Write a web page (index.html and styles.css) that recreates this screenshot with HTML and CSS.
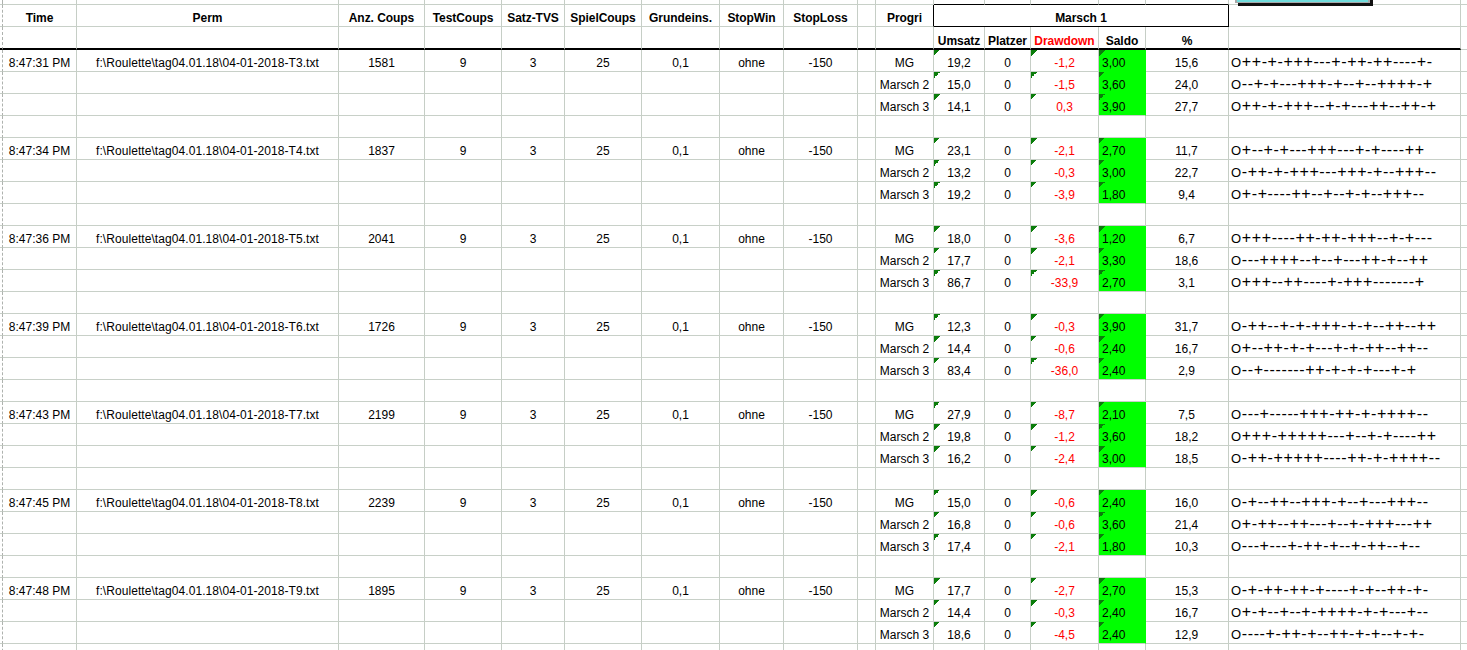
FILE: index.html
```html
<!DOCTYPE html>
<html lang="de">
<head>
<meta charset="utf-8">
<title>Roulette</title>
<link rel="stylesheet" href="styles.css">
</head>
<body>
<div class="sheet">
<div class="button-edge"></div>
<table class="grid">
<colgroup>
<col class="c-edge"><col class="c-time"><col class="c-perm"><col class="c-anz"><col class="c-test"><col class="c-satz"><col class="c-spiel"><col class="c-grund"><col class="c-win"><col class="c-loss"><col class="c-gap"><col class="c-progri"><col class="c-ums"><col class="c-platz"><col class="c-draw"><col class="c-saldo"><col class="c-pct"><col class="c-seq"><col class="c-rest">
</colgroup>
<tbody>
<tr class="r-top"><td class="edge"></td><td></td><td></td><td></td><td></td><td></td><td></td><td></td><td></td><td></td><td></td><td></td><td class="boxtop"></td><td class="boxtop"></td><td class="boxtop"></td><td class="boxtop"></td><td class="boxtop"></td><td></td><td></td></tr>
<tr class="r-head"><td class="edge"></td><th>Time</th><th>Perm</th><th>Anz. Coups</th><th>TestCoups</th><th>Satz-TVS</th><th>SpielCoups</th><th>Grundeins.</th><th>StopWin</th><th>StopLoss</th><th></th><th class="boxleft">Progri</th><th class="box" colspan="5">Marsch 1</th><td></td><td></td></tr>
<tr class="r-sub"><td class="edge"></td><td></td><td></td><td></td><td></td><td></td><td></td><td></td><td></td><td></td><td></td><td></td><th>Umsatz</th><th>Platzer</th><th class="red">Drawdown</th><th>Saldo</th><th>%</th><td></td><td class="open"></td></tr>

<tr><td class="edge"></td><td>8:47:31 PM</td><td class="perm">f:\Roulette\tag04.01.18\04-01-2018-T3.txt</td><td>1581</td><td>9</td><td>3</td><td>25</td><td>0,1</td><td>ohne</td><td>-150</td><td></td><td>MG</td><td class="note">19,2</td><td>0</td><td class="note red">-1,2</td><td class="saldo">3,00</td><td class="pct">15,6</td><td class="seq">O++-+-+++---+-++-++----+-</td><td></td></tr>
<tr><td class="edge"></td><td></td><td></td><td></td><td></td><td></td><td></td><td></td><td></td><td></td><td></td><td>Marsch 2</td><td class="note">15,0</td><td>0</td><td class="note red">-1,5</td><td class="saldo">3,60</td><td class="pct">24,0</td><td class="seq">O--+-+---+++-+--+--++++-+</td><td></td></tr>
<tr><td class="edge"></td><td></td><td></td><td></td><td></td><td></td><td></td><td></td><td></td><td></td><td></td><td>Marsch 3</td><td class="note">14,1</td><td>0</td><td class="note red">0,3</td><td class="saldo end">3,90</td><td class="pct">27,7</td><td class="seq">O++-+-+++--+-+---++--++-+</td><td></td></tr>
<tr><td class="edge"></td><td></td><td></td><td></td><td></td><td></td><td></td><td></td><td></td><td></td><td></td><td></td><td></td><td></td><td></td><td></td><td></td><td></td><td></td></tr>

<tr><td class="edge"></td><td>8:47:34 PM</td><td class="perm">f:\Roulette\tag04.01.18\04-01-2018-T4.txt</td><td>1837</td><td>9</td><td>3</td><td>25</td><td>0,1</td><td>ohne</td><td>-150</td><td></td><td>MG</td><td class="note">23,1</td><td>0</td><td class="note red">-2,1</td><td class="saldo">2,70</td><td class="pct">11,7</td><td class="seq">O+--+-+---+++---+-+----++</td><td></td></tr>
<tr><td class="edge"></td><td></td><td></td><td></td><td></td><td></td><td></td><td></td><td></td><td></td><td></td><td>Marsch 2</td><td class="note">13,2</td><td>0</td><td class="note red">-0,3</td><td class="saldo">3,00</td><td class="pct">22,7</td><td class="seq">O-++-+-+++---+++-+--+++--</td><td></td></tr>
<tr><td class="edge"></td><td></td><td></td><td></td><td></td><td></td><td></td><td></td><td></td><td></td><td></td><td>Marsch 3</td><td class="note">19,2</td><td>0</td><td class="note red">-3,9</td><td class="saldo end">1,80</td><td class="pct">9,4</td><td class="seq">O+-+----++--+--+-+--+++--</td><td></td></tr>
<tr><td class="edge"></td><td></td><td></td><td></td><td></td><td></td><td></td><td></td><td></td><td></td><td></td><td></td><td></td><td></td><td></td><td></td><td></td><td></td><td></td></tr>

<tr><td class="edge"></td><td>8:47:36 PM</td><td class="perm">f:\Roulette\tag04.01.18\04-01-2018-T5.txt</td><td>2041</td><td>9</td><td>3</td><td>25</td><td>0,1</td><td>ohne</td><td>-150</td><td></td><td>MG</td><td class="note">18,0</td><td>0</td><td class="note red">-3,6</td><td class="saldo">1,20</td><td class="pct">6,7</td><td class="seq">O+++----++-++-+++--+-+---</td><td></td></tr>
<tr><td class="edge"></td><td></td><td></td><td></td><td></td><td></td><td></td><td></td><td></td><td></td><td></td><td>Marsch 2</td><td class="note">17,7</td><td>0</td><td class="note red">-2,1</td><td class="saldo">3,30</td><td class="pct">18,6</td><td class="seq">O---++++--+--+---++-+--++</td><td></td></tr>
<tr><td class="edge"></td><td></td><td></td><td></td><td></td><td></td><td></td><td></td><td></td><td></td><td></td><td>Marsch 3</td><td class="note">86,7</td><td>0</td><td class="note red">-33,9</td><td class="saldo end">2,70</td><td class="pct">3,1</td><td class="seq">O+++--++----+-+++-------+</td><td></td></tr>
<tr><td class="edge"></td><td></td><td></td><td></td><td></td><td></td><td></td><td></td><td></td><td></td><td></td><td></td><td></td><td></td><td></td><td></td><td></td><td></td><td></td></tr>

<tr><td class="edge"></td><td>8:47:39 PM</td><td class="perm">f:\Roulette\tag04.01.18\04-01-2018-T6.txt</td><td>1726</td><td>9</td><td>3</td><td>25</td><td>0,1</td><td>ohne</td><td>-150</td><td></td><td>MG</td><td class="note">12,3</td><td>0</td><td class="note red">-0,3</td><td class="saldo">3,90</td><td class="pct">31,7</td><td class="seq">O-++--+-+-+++-+-+--++--++</td><td></td></tr>
<tr><td class="edge"></td><td></td><td></td><td></td><td></td><td></td><td></td><td></td><td></td><td></td><td></td><td>Marsch 2</td><td class="note">14,4</td><td>0</td><td class="note red">-0,6</td><td class="saldo">2,40</td><td class="pct">16,7</td><td class="seq">O+--++-+-+---+-+-++--++--</td><td></td></tr>
<tr><td class="edge"></td><td></td><td></td><td></td><td></td><td></td><td></td><td></td><td></td><td></td><td></td><td>Marsch 3</td><td class="note">83,4</td><td>0</td><td class="note red">-36,0</td><td class="saldo end">2,40</td><td class="pct">2,9</td><td class="seq">O--+-------++-+-+-+---+-+</td><td></td></tr>
<tr><td class="edge"></td><td></td><td></td><td></td><td></td><td></td><td></td><td></td><td></td><td></td><td></td><td></td><td></td><td></td><td></td><td></td><td></td><td></td><td></td></tr>

<tr><td class="edge"></td><td>8:47:43 PM</td><td class="perm">f:\Roulette\tag04.01.18\04-01-2018-T7.txt</td><td>2199</td><td>9</td><td>3</td><td>25</td><td>0,1</td><td>ohne</td><td>-150</td><td></td><td>MG</td><td class="note">27,9</td><td>0</td><td class="note red">-8,7</td><td class="saldo">2,10</td><td class="pct">7,5</td><td class="seq">O---+-----+++-++-+-++++--</td><td></td></tr>
<tr><td class="edge"></td><td></td><td></td><td></td><td></td><td></td><td></td><td></td><td></td><td></td><td></td><td>Marsch 2</td><td class="note">19,8</td><td>0</td><td class="note red">-1,2</td><td class="saldo">3,60</td><td class="pct">18,2</td><td class="seq">O+++-+++++---+--+-+----++</td><td></td></tr>
<tr><td class="edge"></td><td></td><td></td><td></td><td></td><td></td><td></td><td></td><td></td><td></td><td></td><td>Marsch 3</td><td class="note">16,2</td><td>0</td><td class="note red">-2,4</td><td class="saldo end">3,00</td><td class="pct">18,5</td><td class="seq">O-++-+++++----++-+-++++--</td><td></td></tr>
<tr><td class="edge"></td><td></td><td></td><td></td><td></td><td></td><td></td><td></td><td></td><td></td><td></td><td></td><td></td><td></td><td></td><td></td><td></td><td></td><td></td></tr>

<tr><td class="edge"></td><td>8:47:45 PM</td><td class="perm">f:\Roulette\tag04.01.18\04-01-2018-T8.txt</td><td>2239</td><td>9</td><td>3</td><td>25</td><td>0,1</td><td>ohne</td><td>-150</td><td></td><td>MG</td><td class="note">15,0</td><td>0</td><td class="note red">-0,6</td><td class="saldo">2,40</td><td class="pct">16,0</td><td class="seq">O-+--++--+++-+--+---+++--</td><td></td></tr>
<tr><td class="edge"></td><td></td><td></td><td></td><td></td><td></td><td></td><td></td><td></td><td></td><td></td><td>Marsch 2</td><td class="note">16,8</td><td>0</td><td class="note red">-0,6</td><td class="saldo">3,60</td><td class="pct">21,4</td><td class="seq">O+-++--++---+--+-+++---++</td><td></td></tr>
<tr><td class="edge"></td><td></td><td></td><td></td><td></td><td></td><td></td><td></td><td></td><td></td><td></td><td>Marsch 3</td><td class="note">17,4</td><td>0</td><td class="note red">-2,1</td><td class="saldo end">1,80</td><td class="pct">10,3</td><td class="seq">O---+---+-++-+--+-++--+--</td><td></td></tr>
<tr><td class="edge"></td><td></td><td></td><td></td><td></td><td></td><td></td><td></td><td></td><td></td><td></td><td></td><td></td><td></td><td></td><td></td><td></td><td></td><td></td></tr>

<tr><td class="edge"></td><td>8:47:48 PM</td><td class="perm">f:\Roulette\tag04.01.18\04-01-2018-T9.txt</td><td>1895</td><td>9</td><td>3</td><td>25</td><td>0,1</td><td>ohne</td><td>-150</td><td></td><td>MG</td><td class="note">17,7</td><td>0</td><td class="note red">-2,7</td><td class="saldo">2,70</td><td class="pct">15,3</td><td class="seq">O-+-++-++-+----+-+--++-+-</td><td></td></tr>
<tr><td class="edge"></td><td></td><td></td><td></td><td></td><td></td><td></td><td></td><td></td><td></td><td></td><td>Marsch 2</td><td class="note">14,4</td><td>0</td><td class="note red">-0,3</td><td class="saldo">2,40</td><td class="pct">16,7</td><td class="seq">O+-+--+--+-++++-+-+---+--</td><td></td></tr>
<tr><td class="edge"></td><td></td><td></td><td></td><td></td><td></td><td></td><td></td><td></td><td></td><td></td><td>Marsch 3</td><td class="note">18,6</td><td>0</td><td class="note red">-4,5</td><td class="saldo end">2,40</td><td class="pct">12,9</td><td class="seq">O----+-++-+--++-+-+--+-+-</td><td></td></tr>
<tr><td class="edge"></td><td></td><td></td><td></td><td></td><td></td><td></td><td></td><td></td><td></td><td></td><td></td><td></td><td></td><td></td><td></td><td></td><td></td><td></td></tr>
</tbody>
</table>
</div>
</body>
</html>
```

FILE: styles.css
```css
html, body { margin: 0; padding: 0; background: #fff; height: 650px; overflow: hidden; }

.sheet { position: relative; width: 1467px; height: 650px; overflow: hidden; }

.grid {
  table-layout: fixed;
  width: 1467px;
  border-collapse: separate;
  border-spacing: 0;
  font: 12px/14px "Liberation Sans", Arial, sans-serif;
  color: #000;
}

.c-edge { width: 3px; }
.c-time { width: 74px; }
.c-perm { width: 262px; }
.c-anz { width: 86px; }
.c-test { width: 77px; }
.c-satz { width: 63px; }
.c-spiel { width: 77px; }
.c-grund { width: 78px; }
.c-win { width: 64px; }
.c-loss { width: 74px; }
.c-gap { width: 18px; }
.c-progri { width: 58px; }
.c-ums { width: 51px; }
.c-platz { width: 46px; }
.c-draw { width: 68px; }
.c-saldo { width: 47px; }
.c-pct { width: 83px; }
.c-seq { width: 232px; }
.c-rest { width: 7px; }

.grid td, .grid th {
  height: 22px;
  box-sizing: border-box;
  padding: 0 0 1px;
  vertical-align: bottom;
  text-align: center;
  white-space: nowrap;
  overflow: hidden;
  border-right: 1px solid #c6cec6;
  border-bottom: 1px solid #c8d0c8;
}

.grid th { font-weight: bold; letter-spacing: -0.05px; }

.grid .edge { border-right: 1px dashed #aeb2ae; }

.grid .perm { letter-spacing: 0.07px; }
.grid .pct { padding-right: 1px; }

.grid .r-top td { height: 5px; padding: 0; }
.grid .r-top .boxtop { border-bottom-color: #000; }

.grid .r-head .boxleft { border-right-color: #000; }
.grid .r-head .box { border-right: 1px solid #000; border-bottom: 1px solid #000; }

.grid .r-sub td, .grid .r-sub th { height: 23px; border-bottom: 2px solid #000; padding-bottom: 0; }
.grid .r-sub .open { border-bottom: 1px solid #c8d0c8; }

.grid .red { color: #f00; }

.grid .note {
  background: linear-gradient(135deg, #0b7d0b 50%, transparent 50%) no-repeat 0 0 / 6px 6px;
}

.grid .saldo {
  background: #0f0 linear-gradient(135deg, #0b7d0b 50%, transparent 50%) no-repeat 0 0 / 6px 6px;
  text-align: left;
  padding-left: 3px;
  border-right-color: #0f0;
  border-bottom-color: #0f0;
}
.grid .saldo.end { border-bottom-color: #c8d0c8; }

.grid .seq {
  text-align: left;
  padding-left: 2px;
  font-size: 16px;
  letter-spacing: 0.62px;
}
.grid .seq::first-letter { font-size: 13px; }

.button-edge {
  position: absolute;
  left: 1235px;
  top: -13px;
  width: 131px;
  height: 13px;
  background: #70dcdc;
  border-style: solid;
  border-color: #a8a8a8;
  border-width: 2px 2px 1px;
  box-shadow: 3px 3px 0 #111;
  z-index: 1;
}
```
